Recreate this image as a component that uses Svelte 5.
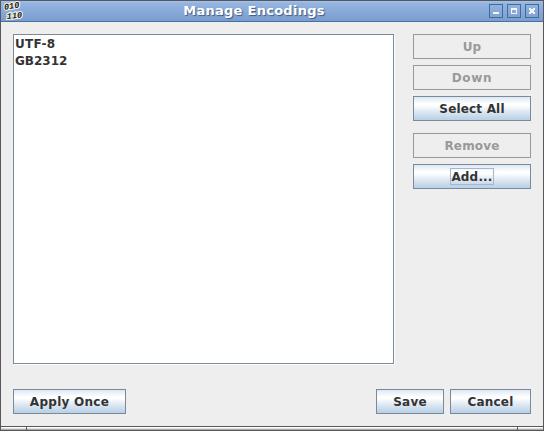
<script>
  const encodings = ['UTF-8', 'GB2312'];
</script>

<div class="window">
  <header>
    <svg class="logo" width="20" height="20" viewBox="0 0 20 20">
      <text transform="translate(1.500 9) rotate(-10)">010</text>
      <text transform="translate(4 18) rotate(-6)">110</text>
    </svg>
    <h1>Manage Encodings</h1>
    <div class="controls">
      <svg width="14" height="14" shape-rendering="crispEdges"><rect x=".5" y=".5" width="13" height="13" /><path d="M4 8h6v2H4z" /></svg>
      <svg width="14" height="14" shape-rendering="crispEdges"><rect x=".5" y=".5" width="13" height="13" /><path fill-rule="evenodd" d="M4 4h6v6H4zM5 6v3h4V6z" /></svg>
      <svg width="14" height="14" shape-rendering="crispEdges"><rect x=".5" y=".5" width="13" height="13" /><path d="M4 4h2v1h2V4h2v2H9v2h1v2H8V9H6v1H4V8h1V6H4z" /></svg>
    </div>
  </header>
  <main>
    <div class="body">
      <div class="list">
        {#each encodings as encoding}<div>{encoding}</div>{/each}
      </div>
      <div class="side">
        <button disabled>Up</button>
        <button class="down" disabled>Down</button>
        <button>Select All</button>
        <button class="gap" disabled>Remove</button>
        <button class="add"><span class="focus">Add...</span></button>
      </div>
    </div>
    <div class="actions">
      <button class="apply">Apply Once</button>
      <button class="save">Save</button>
      <button class="cancel">Cancel</button>
    </div>
  </main>
  <footer><i></i><i></i><i></i></footer>
</div>

<style>
  * { box-sizing: border-box; }
  .window {
    width: 544px;
    height: 431px;
    display: flex;
    flex-direction: column;
    border: 1px solid #58585c;
    background: #eee;
    color: #333;
    font: bold 12px 'DejaVu Sans', sans-serif;
    overflow: hidden;
  }
  header {
    height: 21px;
    flex: none;
    display: flex;
    align-items: flex-start;
    background: linear-gradient(#a5c4ec 0, #95b5e0 2px, #7a9dd0 100%);
    border-bottom: 1px solid #49719f;
  }
  .logo { flex: none; margin-left: 2px; }
  .logo text {
    font: italic bold 8.5px 'Liberation Mono', monospace;
    letter-spacing: .1px;
    fill: #161616;
    stroke: #f0f0e4;
    stroke-width: 2.2px;
    paint-order: stroke;
  }
  h1 {
    flex: 1;
    margin: 0 4px 0 0;
    font-size: 13px;
    line-height: 19px;
    letter-spacing: .27px;
    text-align: center;
    color: #fff;
    text-shadow: 1px 1px 1px #3c5a82;
    white-space: nowrap;
  }
  .controls { display: flex; gap: 4px; padding: 3px 4px 0 0; }
  .controls svg { display: block; }
  .controls rect { fill: none; stroke: #426b9d; }
  .controls path { fill: #f4f6fa; }
  main { flex: 1; padding: 12px 12px 0; }
  .body { display: flex; justify-content: space-between; }
  .list {
    width: 381px;
    height: 330px;
    padding: 1px 1px 0;
    background: #fff;
    border: 1px solid #7a8a99;
    box-shadow: 1px 1px #fff;
    line-height: 17px;
  }
  .list div:first-child { letter-spacing: .25px; }
  .side { width: 118px; display: flex; flex-direction: column; gap: 6px; }
  button {
    height: 25px;
    padding: 1px 0 0;
    flex: none;
    border: 1px solid #7a8a99;
    border-radius: 0;
    background: linear-gradient(#dde8f3 0, #fff 30%, #fff 36%, #dce7f2 65%, #b8cfe5 100%);
    color: #333;
    font: inherit;
    line-height: 23px;
    letter-spacing: .18px;
  }
  button:disabled { border-color: #999; background: #eee; color: #999; }
  .down { letter-spacing: .7px; }
  .gap { margin-top: 6px; }
  .add { padding: 0; }
  .focus {
    display: block;
    width: 44px;
    height: 17px;
    margin: 0 auto;
    padding-top: 1px;
    line-height: 17px;
    box-shadow: inset 0 0 0 1px #a3b8cc;
  }
  .actions { display: flex; gap: 6px; margin-top: 25px; }
  .apply { width: 113px; margin-right: auto; letter-spacing: .27px; }
  .save { width: 68px; }
  .cancel { width: 81px; }
  footer {
    height: 4px;
    display: flex;
    gap: 1px;
    border-top: 1px solid #58585c;
    background: #58585c;
  }
  footer i { background: linear-gradient(#fff 0 1px, #e0e0e0 1px 2px, #aaa 2px); }
  footer i:first-child, footer i:last-child { width: 25px; }
  footer i:nth-child(2) { flex: 1; }
</style>
